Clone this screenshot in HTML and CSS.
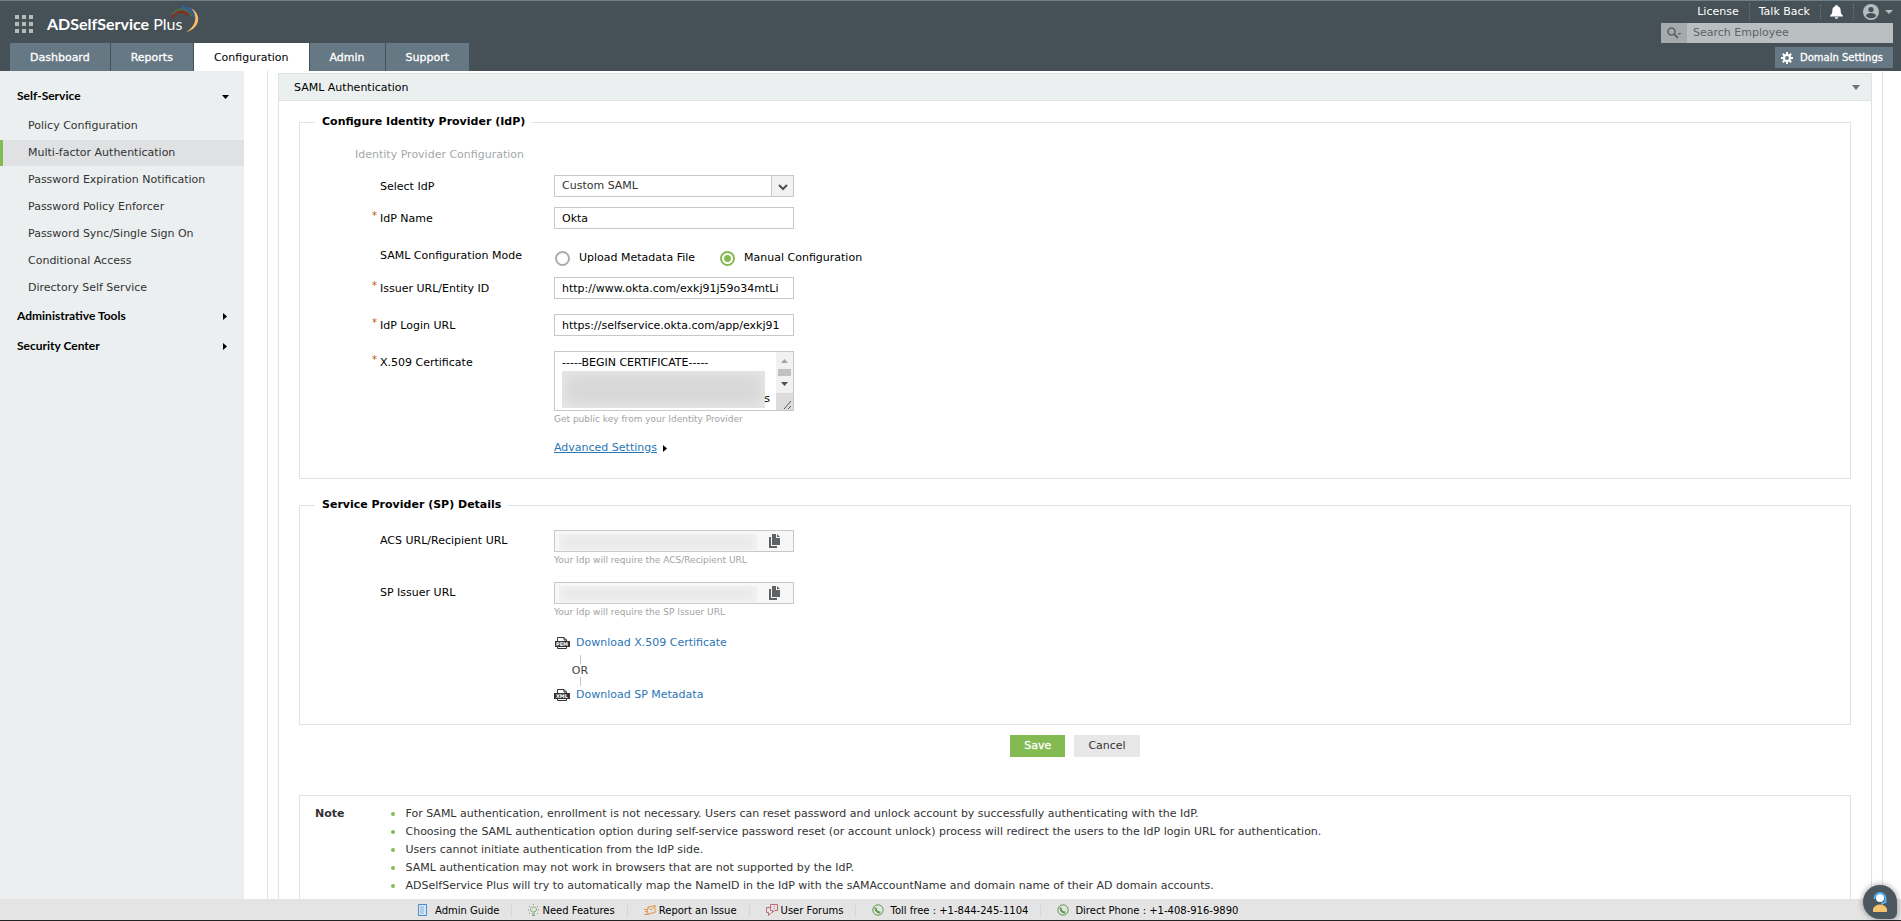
FILE: index.html
```
<!DOCTYPE html>
<html lang="en">
<head>
    <meta charset="UTF-8">
    <meta name="viewport" content="width=device-width, initial-scale=1.0">
    <title>ADSelfService Plus</title>
    <link rel="stylesheet" href="styles.css">
</head>

<body>

    <header class="header">
        <div class="header-left">
            <div class="brand">
                <svg class="apps" width="18" height="18" viewBox="0 0 18 18" fill="#b3bbbb">
                    <path d="M0 0h4v4H0zM7 0h4v4H7zM14 0h4v4h-4zM0 7h4v4H0zM7 7h4v4H7zM14 7h4v4h-4zM0 14h4v4H0zM7 14h4v4H7zM14 14h4v4h-4z"/>
                </svg>
                <span class="logo"><b>ADSelfService</b> Plus</span>
                <svg class="swoosh" width="28" height="27" viewBox="0 0 28 27" fill="none">
                    <path d="M1 12C4 5 12 4 17 9" stroke="#8e2a1c" stroke-width="2"/>
                    <path d="M2 8C7 1 17 2 21 10" stroke="#4f7a35" stroke-width="2" stroke-dasharray="2 1"/>
                    <path d="M11 2c7-1 12 4 13 10" stroke="#2f62b5" stroke-width="3" stroke-dasharray="2 1"/>
                    <path d="M20 2C32 9 28 23 15 26C24 21 28 11 20 2z" fill="#f6bd62"/>
                </svg>
            </div>
            <nav class="tabs">
                <a href="#">Dashboard</a>
                <a href="#">Reports</a>
                <a href="#" class="active">Configuration</a>
                <a href="#">Admin</a>
                <a href="#">Support</a>
            </nav>
        </div>

        <div class="header-right">
            <div class="top-links">
                <a href="#">License</a>
                <a href="#">Talk Back</a>
                <a href="#" aria-label="Notifications">
                    <svg width="13" height="14" viewBox="0 0 13 14" fill="#fff">
                        <path d="M6.500 0C7.300 0 7.800.6 7.800 1.300C10 2 10.700 3.600 10.700 6C10.700 8.600 11.500 9.500 13 10.700V11.500H0V10.700C1.500 9.500 2.300 8.600 2.300 6C2.300 3.600 3 2 5.200 1.300C5.200.6 5.700 0 6.500 0zM4.800 12.200h3.400a1.700 1.600 0 0 1-3.400 0z"/>
                    </svg>
                </a>
                <a href="#" class="account" aria-label="Account">
                    <svg width="16" height="16" viewBox="0 0 16 16">
                        <circle cx="8" cy="8" r="8" fill="#b5bcbe"/>
                        <circle cx="8" cy="5.500" r="2.600" fill="#465157"/>
                        <path d="M3 12c0-4 10-4 10 0-2 3-8 3-10 0z" fill="#465157"/>
                    </svg>
                    <svg width="8" height="4" viewBox="0 0 8 4"><path d="M0 0h8L4 4z" fill="#b5bcbe"/></svg>
                </a>
            </div>
            <div class="search">
                <button type="button" aria-label="Search">
                    <svg width="15" height="12" viewBox="0 0 15 12" fill="none" stroke="#5b6468">
                        <circle cx="4.500" cy="4.500" r="3.500" stroke-width="1.600"/>
                        <path d="M7 7l4 4" stroke-width="2"/>
                        <path d="M10.500 6h4l-2 2z" fill="#5b6468" stroke="none"/>
                    </svg>
                </button>
                <input type="text" placeholder="Search Employee" aria-label="Search Employee">
            </div>
            <button type="button" class="domain">
                <svg width="12" height="12" viewBox="0 0 12 12" fill="none" stroke="#fff">
                    <circle cx="6" cy="6" r="3" stroke-width="2"/>
                    <path d="M6 0v2.500M6 9.500V12M0 6h2.500M9.500 6H12M1.800 1.800l1.700 1.700M8.500 8.500l1.700 1.700M10.200 1.800L8.500 3.500M3.500 8.500l-1.700 1.700" stroke-width="2"/>
                </svg>
                Domain Settings
            </button>
        </div>
    </header>

    <div class="page">
        <aside class="sidebar">
            <button type="button" class="group">Self-Service
                <svg width="8" height="8" viewBox="0 0 8 8"><path d="M1 3h7L4.500 7z"/></svg>
            </button>
            <ul>
                <li><a href="#">Policy Configuration</a></li>
                <li><a href="#" class="active">Multi-factor Authentication</a></li>
                <li><a href="#">Password Expiration Notification</a></li>
                <li><a href="#">Password Policy Enforcer</a></li>
                <li><a href="#">Password Sync/Single Sign On</a></li>
                <li><a href="#">Conditional Access</a></li>
                <li><a href="#">Directory Self Service</a></li>
            </ul>
            <button type="button" class="group">Administrative Tools
                <svg width="8" height="8" viewBox="0 0 8 8"><path d="M2 1l4 3.500L2 8z"/></svg>
            </button>
            <button type="button" class="group">Security Center
                <svg width="8" height="8" viewBox="0 0 8 8"><path d="M2 1l4 3.500L2 8z"/></svg>
            </button>
        </aside>

        <main class="content">
            <section class="panel">
                <h2 class="panel-title">SAML Authentication
                    <svg width="8" height="5" viewBox="0 0 8 5"><path d="M0 0h8L4 5z" fill="#66757e"/></svg>
                </h2>

                <form class="panel-body">
                    <fieldset class="idp">
                        <legend>Configure Identity Provider (IdP)</legend>
                        <p class="subtitle">Identity Provider Configuration</p>

                        <div class="row">
                            <label for="idp">Select IdP</label>
                            <div class="select">
                                <select id="idp">
                                    <option>Custom SAML</option>
                                </select>
                                <svg width="10" height="7" viewBox="0 0 10 7" fill="none" stroke="#465157" stroke-width="2"><path d="M1 1l4 4 4-4"/></svg>
                            </div>
                        </div>
                        <div class="row required">
                            <label for="name">IdP Name</label>
                            <input type="text" id="name" value="Okta">
                        </div>
                        <div class="row mode" role="radiogroup" aria-labelledby="mode-label">
                            <span class="label" id="mode-label">SAML Configuration Mode</span>
                            <label class="radio"><input type="radio" name="mode">Upload Metadata File</label>
                            <label class="radio"><input type="radio" name="mode" checked>Manual Configuration</label>
                        </div>
                        <div class="row required">
                            <label for="issuer">Issuer URL/Entity ID</label>
                            <input type="text" id="issuer" value="http://www.okta.com/exkj91j59o34mtLi">
                        </div>
                        <div class="row required wide">
                            <label for="login">IdP Login URL</label>
                            <input type="text" id="login" value="https://selfservice.okta.com/app/exkj91">
                        </div>
                        <div class="row required wide">
                            <label for="cert">X.509 Certificate</label>
                            <div class="field">
                                <div class="cert">
                                    <textarea id="cert">-----BEGIN CERTIFICATE-----</textarea>
                                    <span class="redacted"></span>
                                    <span class="tail">s</span>
                                    <svg class="scroll" width="17" height="58" viewBox="0 0 17 58">
                                        <path d="M0 0h17v41H0z" fill="#f1f1f1"/>
                                        <path d="M0 41h17v17H0z" fill="#dcdcdc"/>
                                        <path d="M5 11h7L8.500 7z" fill="#a3a3a3"/>
                                        <path d="M2 17h13v7H2z" fill="#c1c1c1"/>
                                        <path d="M5 30h7l-3.500 4z" fill="#465157"/>
                                        <path d="M8 57l7-8M12 57l3-3" stroke="#555"/>
                                    </svg>
                                </div>
                                <p class="hint">Get public key from your Identity Provider</p>
                            </div>
                        </div>
                        <div class="advanced">
                            <a href="#">Advanced Settings</a>
                            <svg width="4" height="8" viewBox="0 0 4 8"><path d="M0 1l4 3.500L0 8z"/></svg>
                        </div>
                    </fieldset>

                    <fieldset class="sp">
                        <legend>Service Provider (SP) Details</legend>
                        <div class="row">
                            <label for="acs">ACS URL/Recipient URL</label>
                            <div class="field">
                                <div class="copy">
                                    <input type="text" id="acs" readonly>
                                    <span class="redacted"></span>
                                    <button type="button" aria-label="Copy">
                                        <svg width="11" height="14" viewBox="0 0 11 14" fill="#606366"><path d="M3 0h4v4h4v7H3zM8 0l3 3H8zM0 3h2v9h6v2H0z"/></svg>
                                    </button>
                                </div>
                                <p class="hint">Your Idp will require the ACS/Recipient URL</p>
                            </div>
                        </div>
                        <div class="row wide">
                            <label for="sp">SP Issuer URL</label>
                            <div class="field">
                                <div class="copy">
                                    <input type="text" id="sp" readonly>
                                    <span class="redacted"></span>
                                    <button type="button" aria-label="Copy">
                                        <svg width="11" height="14" viewBox="0 0 11 14" fill="#606366"><path d="M3 0h4v4h4v7H3zM8 0l3 3H8zM0 3h2v9h6v2H0z"/></svg>
                                    </button>
                                </div>
                                <p class="hint">Your Idp will require the SP Issuer URL</p>
                            </div>
                        </div>
                        <div class="downloads">
                            <a href="#">
                                <svg width="16" height="12" viewBox="0 0 16 12">
                                    <path d="M3.500 4V.5H10L12.500 3v1M3.500 9v2.500h9V9M10 .5V3h2.500" fill="none" stroke="#333"/>
                                    <path d="M1 4h15v6H1z" fill="#333"/>
                                    <text x="8" y="9" text-anchor="middle">PEM</text>
                                </svg>
                                Download X.509 Certificate
                            </a>
                            <span class="or">OR</span>
                            <a href="#">
                                <svg width="16" height="12" viewBox="0 0 16 12">
                                    <path d="M3.500 4V.5H10L12.500 3v1M3.500 9v2.500h9V9M10 .5V3h2.500" fill="none" stroke="#333"/>
                                    <path d="M0 4h16v6H0z" fill="#333"/>
                                    <text x="8" y="9" text-anchor="middle">XML</text>
                                </svg>
                                Download SP Metadata
                            </a>
                        </div>
                    </fieldset>

                    <div class="actions">
                        <button type="submit" class="save">Save</button>
                        <button type="button">Cancel</button>
                    </div>
                </form>

                <div class="note">
                    <h3>Note</h3>
                    <ul>
                        <li>For SAML authentication, enrollment is not necessary. Users can reset password and unlock account by successfully authenticating with the IdP.</li>
                        <li>Choosing the SAML authentication option during self-service password reset (or account unlock) process will redirect the users to the IdP login URL for authentication.</li>
                        <li>Users cannot initiate authentication from the IdP side.</li>
                        <li>SAML authentication may not work in browsers that are not supported by the IdP.</li>
                        <li>ADSelfService Plus will try to automatically map the NameID in the IdP with the sAMAccountName and domain name of their AD domain accounts.</li>
                    </ul>
                </div>
            </section>
        </main>
    </div>

    <footer class="footer">
        <a href="#" class="guide">
            <svg width="9" height="12" viewBox="0 0 9 12"><path d="M.5.5h8v11h-8z" fill="#d5e6f5" stroke="#4a8ccc"/><path d="M2 3h4M2 5h4M2 7h4M2 9h4" stroke="#8ab4dc"/></svg>
            Admin Guide
        </a>
        <a href="#">
            <svg width="11" height="12" viewBox="0 0 11 12" fill="none" stroke="#7fae63"><path d="M4 8c-3-3-1-5 1.500-5S10 5 7 8zM4 10h3" /><path d="M5.500 0v1M1 2l1 1M10 2L9 3M0 6h1M10 6h1M2 9l-1 1M9 9l1 1M4 11.500h3" stroke="#8c9498"/></svg>
            Need Features
        </a>
        <a href="#">
            <svg width="12" height="11" viewBox="0 0 12 11" fill="none" stroke="#dd9a4e"><path d="M4 2l7-1.500v7L3 9zM4 2l3 3 4-4.500M0 4.500h3M1 6.500h2M0 9.500h5"/></svg>
            Report an Issue
        </a>
        <a href="#">
            <svg width="12" height="12" viewBox="0 0 12 12" fill="none" stroke="#bd6a72"><path d="M4.500.5h7v6h-3l-2 2v-2h-2zM4 3.500H.5v5h2v3l3-3M8 2v1M8 4v1"/></svg>
            User Forums
        </a>
        <span class="phone">
            <svg width="12" height="12" viewBox="0 0 12 12" fill="none" stroke="#5f9a4b"><circle cx="6" cy="6" r="5.200"/><path d="M3.500 3.500c0 3 2 5 5 5" stroke-width="2"/></svg>
            Toll free : +1-844-245-1104
        </span>
        <span class="phone">
            <svg width="12" height="12" viewBox="0 0 12 12" fill="none" stroke="#5f9a4b"><circle cx="6" cy="6" r="5.200"/><path d="M3.500 3.500c0 3 2 5 5 5" stroke-width="2"/></svg>
            Direct Phone : +1-408-916-9890
        </span>
    </footer>

    <button type="button" class="chat" aria-label="Chat">
        <svg width="16" height="22" viewBox="0 0 16 22">
            <circle cx="8" cy="7" r="4" fill="#fff"/>
            <path d="M2.500 8a5.500 6 0 0 1 11 0v3l-4 2" fill="none" stroke="#55b4f0" stroke-width="2"/>
            <path d="M1 21v-3c2-6 12-6 14 0v3z" fill="#f6c26f"/>
        </svg>
    </button>

</body>
</html>
```

FILE: styles.css
```
* {
    box-sizing: border-box;
}

body {
    margin: 0;
    height: 100vh;
    display: flex;
    flex-direction: column;
    overflow: hidden;
    background: #fff;
    color: #000;
    font-family: Verdana, "DejaVu Sans", sans-serif;
    font-size: 11px;
    line-height: 18px;
}

a {
    color: #2a76b5;
    text-decoration: none;
}

button,
input,
select,
textarea {
    font: inherit;
    color: inherit;
    border-radius: 0;
}

button {
    border: 0;
    cursor: pointer;
}

svg {
    flex: none;
    display: block;
}

/* header */
.header {
    display: flex;
    justify-content: space-between;
    height: 71px;
    flex: none;
    background: #465157;
    border-top: 1px solid #6f8088;
}

.header-left {
    display: flex;
    flex-direction: column;
    justify-content: space-between;
}

.brand {
    display: flex;
    align-items: center;
    padding: 4px 0 0 15px;
}

.apps {
    margin-top: 10px;
}

.logo {
    margin: 10px 0 0 14px;
    color: #fff;
    font-family: Lato, sans-serif;
    font-size: 16px;
}

.swoosh {
    margin-left: -11px;
}

.tabs {
    display: flex;
    gap: 1px;
    margin-left: 10px;
}

.tabs a {
    padding: 6px 20px 4px;
    background: #667883;
    color: #fff;
    -webkit-text-stroke: 0.3px;
}

.tabs a.active {
    background: #fff;
    color: #000;
    -webkit-text-stroke: 0;
}

.header-right {
    display: flex;
    flex-direction: column;
    align-items: flex-end;
    padding-right: 8px;
}

.top-links {
    display: flex;
    align-items: center;
    height: 22px;
}

.top-links a {
    padding: 0 10px 0 9px;
    color: #fff;
}

.top-links a + a {
    border-left: 1px dotted #6a767c;
}

.top-links .account {
    display: flex;
    align-items: center;
    gap: 6px;
    padding-right: 0;
}

.search {
    display: flex;
    width: 232px;
    height: 20px;
    background: #b9bec0;
}

.search button {
    width: 26px;
    padding: 0 6px;
    background: #a5abad;
}

.search input {
    flex: 1;
    min-width: 0;
    padding: 0 6px;
    border: 0;
    background: none;
}

.search input::placeholder {
    color: #5b6468;
    opacity: 1;
}

.domain {
    display: flex;
    align-items: center;
    gap: 7px;
    height: 21px;
    margin-top: 4px;
    padding: 0 10px 0 6px;
    background: #667883;
    color: #fff;
    font-size: 10px;
    -webkit-text-stroke: 0.3px;
}

/* layout */
.page {
    flex: 1;
    min-height: 0;
    display: flex;
    overflow: hidden;
}

.sidebar {
    width: 244px;
    flex: none;
    padding-top: 10px;
    background: #ebefef;
}

.sidebar .group {
    display: flex;
    justify-content: space-between;
    align-items: center;
    width: 100%;
    height: 30px;
    padding: 0 15px 0 17px;
    background: none;
    font-family: Lato, sans-serif;
    font-size: 12px;
    font-weight: 700;
}

.sidebar ul {
    margin: 0 0 -1px;
    padding: 2px 0 0;
    list-style: none;
}

.sidebar li {
    padding-bottom: 1px;
}

.sidebar li a {
    display: block;
    padding: 4px 0 4px 25px;
    border-left: 3px solid transparent;
    color: #333;
}

.sidebar li a.active {
    border-color: #83ba52;
    background: #dfe1e3;
}

.content {
    flex: 1;
    min-width: 0;
    margin: 0 18px 0 23px;
    padding: 2px 10px 0;
    border: solid #e2e2e2;
    border-width: 0 1px;
}

.panel {
    display: flex;
    flex-direction: column;
    height: 100%;
    border: 1px solid #e2e2e2;
    border-bottom: 0;
}

.panel-title {
    display: flex;
    align-items: center;
    justify-content: space-between;
    flex: none;
    height: 27px;
    margin: 0;
    padding: 1px 11px 0 15px;
    border-bottom: 1px solid #e2e2e2;
    background: #ebefef;
    font-size: 11px;
    font-weight: 400;
}

.panel-body,
.note {
    margin: 0 20px;
}

fieldset {
    margin: 0;
    padding: 0 0 0 80px;
    border: 1px solid #e2e2e2;
}

legend {
    margin-left: -65px;
    padding: 0 7px;
    font-weight: 700;
}

.idp {
    margin-top: 12px;
    padding-bottom: 21px;
}

.sp {
    margin-top: 17px;
    padding-bottom: 20px;
}

.subtitle {
    margin: 15px 0 11px -25px;
    color: #a5a8aa;
}

/* form rows */
.row {
    position: relative;
    display: flex;
    align-items: flex-start;
    margin-bottom: 10px;
}

.row > label:first-child,
.row > .label {
    width: 174px;
    padding-top: 3px;
}

.row.required::before {
    content: "*";
    position: absolute;
    left: -8px;
    top: 0;
    color: #b8530d;
    font-size: 10px;
}

.row.mode {
    height: 28px;
}

.row.wide {
    margin-top: 15px;
}

.row input[type="text"],
.select,
.cert {
    width: 240px;
}

.row input[type="text"] {
    height: 22px;
    padding: 0 7px;
    border: 1px solid #c8c8c8;
    background: #fff;
}

.select {
    position: relative;
    height: 22px;
    border: 1px solid #c8c8c8;
}

.select select {
    display: block;
    width: 100%;
    height: 20px;
    padding: 0 7px;
    border: 0;
    appearance: none;
    background: linear-gradient(90deg, #fff 216px, #c8c8c8 216px, #c8c8c8 217px, #f2f2f2 217px);
    color: #333;
}

.select svg {
    position: absolute;
    right: 5px;
    top: 8px;
    pointer-events: none;
}

.radio {
    display: flex;
    align-items: center;
    gap: 9px;
    margin: 10px 24px 0 1px;
}

.row.mode .label {
    padding-top: 8px;
}

.radio input {
    appearance: none;
    width: 15px;
    height: 15px;
    margin: 0;
    border: 2px solid #a9adb0;
    border-radius: 50%;
}

.radio input:checked {
    border-color: #83ba52;
    background: radial-gradient(#83ba52 3px, #fff 4px);
}

.hint {
    margin: 0;
    color: #a2a2a2;
    font-size: 9px;
    line-height: 16px;
}

.cert {
    position: relative;
    height: 60px;
}

.cert textarea {
    display: block;
    width: 100%;
    height: 60px;
    padding: 2px 7px;
    border: 1px solid #c8c8c8;
    overflow: hidden;
    resize: none;
}

.redacted {
    position: absolute;
}

.cert .redacted {
    left: 8px;
    top: 20px;
    width: 203px;
    height: 37px;
    background: #d8d8d8;
    box-shadow: 0 0 12px 4px #e6e6e6 inset;
}

.cert .tail {
    position: absolute;
    right: 24px;
    top: 39px;
}

.cert .scroll {
    position: absolute;
    right: 1px;
    top: 1px;
}

.advanced {
    display: flex;
    align-items: center;
    gap: 6px;
    margin: 12px 0 0 174px;
}

.advanced a {
    text-decoration: underline;
}

.copy {
    position: relative;
}

.row .copy input[type="text"] {
    display: block;
    background: #f7f7f7;
}

.copy .redacted {
    left: 5px;
    top: 4px;
    width: 198px;
    height: 16px;
    background: #e9e9e9;
    box-shadow: 0 0 8px 2px #f2f2f2 inset;
}

.copy button {
    position: absolute;
    right: 14px;
    top: 4px;
    padding: 0;
    background: none;
}

.sp > .row:first-of-type {
    margin-top: 16px;
}

.sp .row {
    margin-bottom: 14px;
}

.sp .row > label:first-child {
    padding-top: 2px;
}

.sp .row.wide {
    margin-top: 14px;
}

.downloads {
    margin: 12px 0 0 174px;
}

.downloads a {
    display: flex;
    align-items: center;
    gap: 6px;
}

.downloads text {
    fill: #fff;
    font-size: 5px;
    font-weight: 700;
}

.or {
    display: flex;
    flex-direction: column;
    align-items: center;
    width: 52px;
    padding-top: 3px;
    color: #444;
    line-height: 13px;
}

.or::before,
.or::after {
    content: "";
    width: 1px;
    height: 9px;
    background: #c8c8c8;
}

.actions {
    display: flex;
    justify-content: center;
    gap: 9px;
    margin-top: 10px;
}

.actions button {
    height: 22px;
    padding: 0 14px;
    background: #e7e7e7;
    color: #333;
}

.actions .save {
    background: #83ba52;
    color: #fff;
    -webkit-text-stroke: 0.3px;
}

/* note */
.note {
    display: flex;
    flex: 1;
    gap: 47px;
    margin-top: 38px;
    padding: 9px 15px 0;
    border: 1px solid #e2e2e2;
    border-bottom: 0;
    color: #333;
}

.note h3 {
    margin: 0;
    font-size: 11px;
}

.note ul {
    margin: 0;
    padding: 0;
    list-style: none;
}

.note li {
    display: flex;
    align-items: center;
    gap: 10px;
}

.note li::before {
    content: "";
    width: 4px;
    height: 4px;
    border-radius: 50%;
    background: #83ba52;
}

/* footer */
.footer {
    display: flex;
    flex: none;
    align-items: center;
    height: 22px;
    padding: 1px 0 0 418px;
    background: #e4e4e4;
    border-bottom: 1px solid #222;
    font-size: 10px;
}

.footer a,
.footer span {
    display: flex;
    align-items: center;
    gap: 3px;
    padding-right: 12px;
    margin-right: 16px;
    border-right: 1px solid #d5d5d5;
    color: #000;
    line-height: 13px;
}

.footer .guide {
    gap: 8px;
}

.footer .phone {
    gap: 6px;
}

.footer span:last-child {
    border: 0;
}

.chat {
    position: fixed;
    right: 4px;
    bottom: 2px;
    display: flex;
    align-items: center;
    justify-content: center;
    width: 34px;
    height: 34px;
    padding: 0;
    border-radius: 17px 17px 6px 17px;
    background: #4b585f;
    box-shadow: 0 0 6px rgba(0, 0, 0, 0.4);
}
```
